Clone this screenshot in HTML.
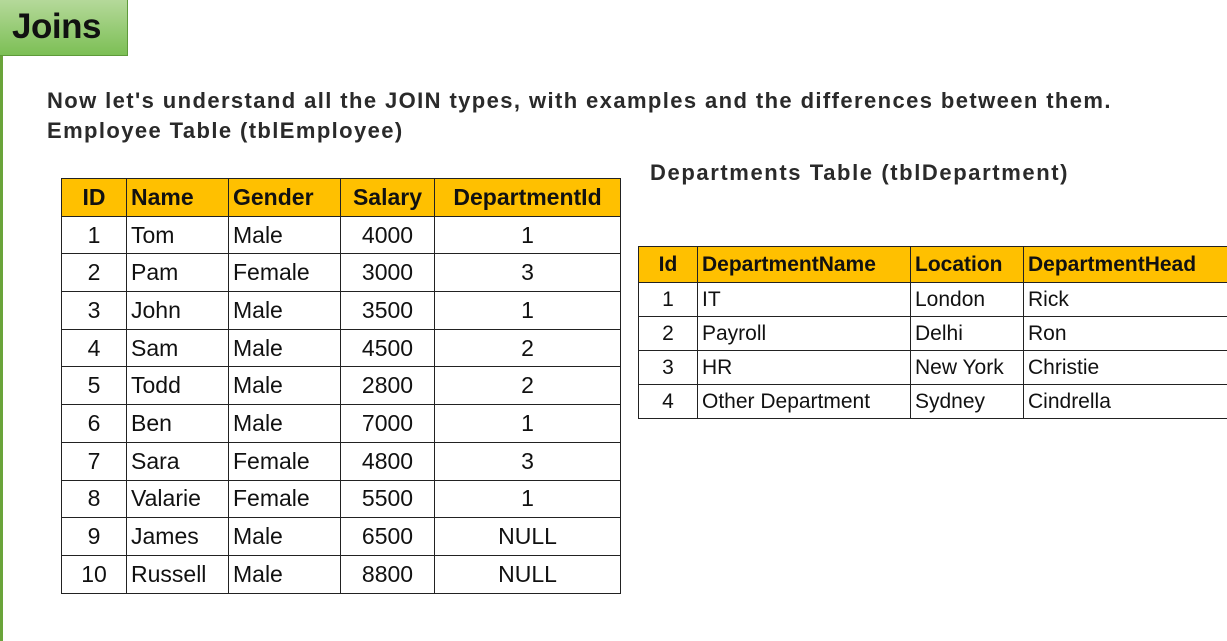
<!DOCTYPE html>
<html><head><meta charset="utf-8"><style>
body{margin:0;width:1227px;height:641px;background:#fff;position:relative;overflow:hidden;font-family:"Liberation Sans",Arial,sans-serif}
.vl{position:absolute;left:0;top:0;width:3px;height:641px;background:#6aa43a}
.title{position:absolute;left:0;top:0;width:128px;height:56px;background:linear-gradient(#b5d99a,#7cbf55);border-right:1px solid #5e9a3a;border-bottom:1px solid #5e9a3a;box-sizing:border-box;font-size:35px;font-weight:bold;color:#111;padding-left:12px;line-height:54px;letter-spacing:-0.5px}
.t{position:absolute;font-weight:bold;font-size:22px;color:#2a2a2a;letter-spacing:1.4px;white-space:nowrap}
table{position:absolute;border-collapse:collapse;table-layout:fixed;color:#111}
td,th{border:1.5px solid #222;padding:0 0 0 4px;white-space:nowrap;overflow:hidden}
th{background:#ffc000;text-align:left;font-weight:bold}
.c{text-align:center;padding:0}
#e{left:61px;top:178px;width:559px;font-size:23px}
#e tr{height:37.7px}
#d{left:638px;top:246px;width:592px;font-size:21px}
#d tr{height:34px}
#d th{height:35px}
</style></head><body>
<div class="vl"></div>
<div class="title">Joins</div>
<div class="t" style="left:47px;top:88px">Now let's understand all the JOIN types, with examples and the differences between them.</div>
<div class="t" style="left:47px;top:118px">Employee Table (tblEmployee)</div>
<div class="t" style="left:650px;top:160px;letter-spacing:1.6px">Departments Table (tblDepartment)</div>
<table id="e">
<colgroup><col style="width:65px"><col style="width:102px"><col style="width:112px"><col style="width:94px"><col style="width:186px"></colgroup>
<tr><th class="c">ID</th><th>Name</th><th>Gender</th><th class="c">Salary</th><th class="c">DepartmentId</th></tr>
<tr><td class="c">1</td><td>Tom</td><td>Male</td><td class="c">4000</td><td class="c">1</td></tr>
<tr><td class="c">2</td><td>Pam</td><td>Female</td><td class="c">3000</td><td class="c">3</td></tr>
<tr><td class="c">3</td><td>John</td><td>Male</td><td class="c">3500</td><td class="c">1</td></tr>
<tr><td class="c">4</td><td>Sam</td><td>Male</td><td class="c">4500</td><td class="c">2</td></tr>
<tr><td class="c">5</td><td>Todd</td><td>Male</td><td class="c">2800</td><td class="c">2</td></tr>
<tr><td class="c">6</td><td>Ben</td><td>Male</td><td class="c">7000</td><td class="c">1</td></tr>
<tr><td class="c">7</td><td>Sara</td><td>Female</td><td class="c">4800</td><td class="c">3</td></tr>
<tr><td class="c">8</td><td>Valarie</td><td>Female</td><td class="c">5500</td><td class="c">1</td></tr>
<tr><td class="c">9</td><td>James</td><td>Male</td><td class="c">6500</td><td class="c">NULL</td></tr>
<tr><td class="c">10</td><td>Russell</td><td>Male</td><td class="c">8800</td><td class="c">NULL</td></tr>
</table>
<table id="d">
<colgroup><col style="width:59px"><col style="width:213px"><col style="width:113px"><col style="width:207px"></colgroup>
<tr><th class="c">Id</th><th>DepartmentName</th><th>Location</th><th>DepartmentHead</th></tr>
<tr><td class="c">1</td><td>IT</td><td>London</td><td>Rick</td></tr>
<tr><td class="c">2</td><td>Payroll</td><td>Delhi</td><td>Ron</td></tr>
<tr><td class="c">3</td><td>HR</td><td>New York</td><td>Christie</td></tr>
<tr><td class="c">4</td><td>Other Department</td><td>Sydney</td><td>Cindrella</td></tr>
</table>
</body></html>
